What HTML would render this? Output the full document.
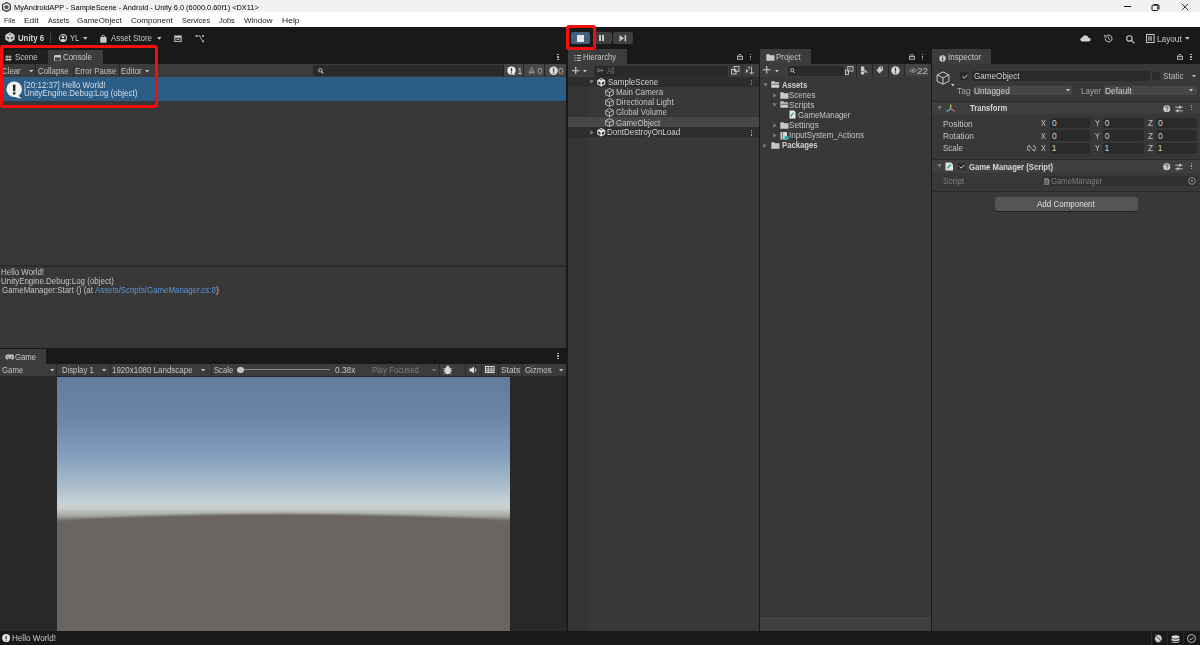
<!DOCTYPE html>
<html><head><meta charset="utf-8"><style>
html,body{margin:0;padding:0;}
body{width:1200px;height:645px;position:relative;overflow:hidden;background:#191919;font-family:"Liberation Sans",sans-serif;}
body>div,body>span,body>svg{position:absolute;}
body>span{white-space:nowrap;transform-origin:0 0;}
</style></head><body>
<div style="left:0px;top:0px;width:1200px;height:12px;background:#f1f1f1;"></div>
<div style="left:0px;top:12px;width:1200px;height:15px;background:#ffffff;"></div>
<div style="left:0px;top:27px;width:1200px;height:618px;background:#191919;"></div>
<svg style="left:2px;top:2px" width="9" height="10" viewBox="0 0 9 10"><path d="M4.5 0.6 L8.4 2.8 V7.3 L4.5 9.5 L0.6 7.3 V2.8Z" fill="none" stroke="#333" stroke-width="1.2"/><path d="M4.5 3 L6.5 4.1 V6.3 L4.5 7.4 L2.5 6.3 V4.1Z" fill="#555"/></svg>
<span style="left:14.41px;top:4.00px;font-size:7.850px;line-height:7.850px;color:#000000;transform:scaleX(0.9429);">MyAndroidAPP - SampleScene - Android - Unity 6.0 (6000.0.60f1) &lt;DX11&gt;</span>
<div style="left:1124.3px;top:6px;width:6.7px;height:1px;background:#111;"></div>
<svg style="left:1151px;top:2.5px" width="9" height="8" viewBox="0 0 9 8"><rect x="1" y="2.2" width="5.8" height="5.3" rx="1" fill="none" stroke="#111" stroke-width="1"/><path d="M2.6 1.6 H6.4 Q8 1.6 8 3.2 V6.4" fill="none" stroke="#111" stroke-width="1"/></svg>
<svg style="left:1180.5px;top:2.5px" width="8" height="8" viewBox="0 0 8 8"><path d="M0.8 0.8 L7.2 7.2 M7.2 0.8 L0.8 7.2" stroke="#222" stroke-width="0.9"/></svg>
<span style="left:4.43px;top:17.00px;font-size:7.850px;line-height:7.850px;color:#222;transform:scaleX(0.9063);">File</span>
<span style="left:24.33px;top:17.00px;font-size:7.850px;line-height:7.850px;color:#222;transform:scaleX(1.0713);">Edit</span>
<span style="left:47.50px;top:17.00px;font-size:7.850px;line-height:7.850px;color:#222;transform:scaleX(0.9022);">Assets</span>
<span style="left:77.10px;top:17.00px;font-size:7.850px;line-height:7.850px;color:#222;transform:scaleX(1.0182);">GameObject</span>
<span style="left:131.35px;top:17.00px;font-size:7.850px;line-height:7.850px;color:#222;transform:scaleX(1.0283);">Component</span>
<span style="left:182.17px;top:17.00px;font-size:7.850px;line-height:7.850px;color:#222;transform:scaleX(0.9329);">Services</span>
<span style="left:219.39px;top:17.00px;font-size:7.850px;line-height:7.850px;color:#222;transform:scaleX(0.9585);">Jobs</span>
<span style="left:244.46px;top:17.00px;font-size:7.850px;line-height:7.850px;color:#222;transform:scaleX(1.0213);">Window</span>
<span style="left:281.82px;top:17.00px;font-size:7.850px;line-height:7.850px;color:#222;transform:scaleX(1.0863);">Help</span>
<svg style="left:5.2px;top:32.1px" width="10" height="10.5" viewBox="0 0 10 10.5"><path d="M5 0.2 L9.6 2.7 V7.8 L5 10.3 L0.4 7.8 V2.7Z" fill="#cfcfcf"/><path d="M3.9 1.9 H6.1 L5 3.3Z" fill="#3a3a3a"/><path d="M2.2 4.4 L4 5.4 V7.6 L2.2 6.6Z" fill="#3a3a3a"/><path d="M7.8 4.4 L6 5.4 V7.6 L7.8 6.6Z" fill="#3a3a3a"/></svg>
<span style="left:18.28px;top:34.00px;font-size:8.850px;line-height:8.850px;color:#d8d8d8;font-weight:bold;transform:scaleX(0.8806);">Unity 6</span>
<div style="left:49.5px;top:33px;width:0.8px;height:10px;background:#444;"></div>
<svg style="left:58.8px;top:33.9px" width="8" height="8" viewBox="0 0 8 8"><circle cx="4" cy="4" r="3.45" fill="none" stroke="#d0d0d0" stroke-width="1.1"/><circle cx="4" cy="3.1" r="1.35" fill="#d8d8d8"/><path d="M1.3 6.1 Q4 4 6.7 6.1 Q5.6 7.5 4 7.5 Q2.4 7.5 1.3 6.1Z" fill="#d8d8d8"/></svg>
<span style="left:69.85px;top:34.00px;font-size:8.700px;line-height:8.700px;color:#c8c8c8;transform:scaleX(0.8842);">YL</span>
<svg style="left:83.3px;top:37px" width="5" height="3" viewBox="0 0 5 3"><path d="M0 0 H4.5 L2.25 2.8Z" fill="#c8c8c8"/></svg>
<svg style="left:99.5px;top:33.5px" width="7" height="9" viewBox="0 0 7 9"><rect x="0.2" y="3" width="6.4" height="5.8" rx="0.8" fill="#c8c8c8"/><path d="M1.8 3.2 V2.2 Q3.3 0.3 4.9 2.2 V3.2" fill="none" stroke="#c8c8c8" stroke-width="1"/></svg>
<span style="left:111.00px;top:34.00px;font-size:8.700px;line-height:8.700px;color:#c8c8c8;transform:scaleX(0.9119);">Asset Store</span>
<svg style="left:157px;top:37px" width="5" height="3" viewBox="0 0 5 3"><path d="M0 0 H4.5 L2.25 2.8Z" fill="#c8c8c8"/></svg>
<svg style="left:174px;top:34.5px" width="8" height="7" viewBox="0 0 8 7"><rect x="0.3" y="0.5" width="7.4" height="1.6" fill="#d0d0d0"/><rect x="0.8" y="2.8" width="6.4" height="3.9" fill="none" stroke="#d0d0d0" stroke-width="1"/><rect x="2.5" y="4.2" width="3" height="0.9" fill="#d0d0d0"/></svg>
<svg style="left:195px;top:33.5px" width="10" height="9" viewBox="0 0 10 9"><circle cx="1.5" cy="2" r="1" fill="#c8c8c8"/><circle cx="8" cy="2" r="1" fill="#c8c8c8"/><circle cx="8" cy="7.3" r="1" fill="#c8c8c8"/><path d="M2.5 2 H5 L7 6.5" fill="none" stroke="#c8c8c8" stroke-width="0.8"/></svg>
<div style="left:570.6px;top:32px;width:19.4px;height:12px;background:#46607e;border-radius:2px"></div>
<div style="left:576.5px;top:34.6px;width:7.5px;height:7.0px;background:#e8e8e8;"></div>
<div style="left:593px;top:32px;width:19px;height:12px;background:#3f3f3f;border-radius:2px"></div>
<div style="left:599.3px;top:34.8px;width:1.5px;height:6.5px;background:#c8c8c8;"></div>
<div style="left:602.4px;top:34.8px;width:1.5px;height:6.5px;background:#c8c8c8;"></div>
<div style="left:613px;top:32px;width:20px;height:12px;background:#3f3f3f;border-radius:2px"></div>
<svg style="left:619px;top:34.8px" width="8" height="7" viewBox="0 0 8 7"><path d="M0.5 0 L5 3.25 L0.5 6.5Z" fill="#c8c8c8"/><rect x="5.6" y="0" width="1.5" height="6.5" fill="#c8c8c8"/></svg>
<svg style="left:1079.5px;top:35px" width="11" height="7" viewBox="0 0 11 7"><path d="M2.5 6.5 Q0.3 6.5 0.3 4.6 Q0.3 3 2 2.8 Q2.6 0.3 5.3 0.3 Q8 0.4 8.5 2.8 Q10.7 3 10.7 4.7 Q10.6 6.5 8.6 6.5Z" fill="#d2d2d2"/></svg>
<svg style="left:1103.5px;top:34.3px" width="9" height="9" viewBox="0 0 9 9"><path d="M1.2 4.5 A3.4 3.4 0 1 0 2.3 2" fill="none" stroke="#c8c8c8" stroke-width="1"/><path d="M0.8 0.6 V3 H3.1" fill="none" stroke="#c8c8c8" stroke-width="0.9"/><path d="M4.6 2.6 V4.8 L6 6" fill="none" stroke="#c8c8c8" stroke-width="0.9"/></svg>
<svg style="left:1126px;top:34.5px" width="9" height="9" viewBox="0 0 9 9"><circle cx="3.4" cy="3.4" r="2.7" fill="none" stroke="#c8c8c8" stroke-width="1.1"/><path d="M5.4 5.4 L8.3 8.3" stroke="#c8c8c8" stroke-width="1.3"/></svg>
<svg style="left:1145.8px;top:34.2px" width="9" height="9" viewBox="0 0 9 9"><rect x="0.5" y="0.5" width="7.6" height="8" fill="none" stroke="#c8c8c8" stroke-width="1"/><rect x="2.3" y="2.2" width="1.2" height="4.6" fill="#c8c8c8"/><rect x="4.5" y="2.2" width="1.2" height="4.6" fill="#c8c8c8"/></svg>
<span style="left:1156.74px;top:35.00px;font-size:8.700px;line-height:8.700px;color:#c8c8c8;transform:scaleX(0.9464);">Layout</span>
<svg style="left:1185.4px;top:37.2px" width="5" height="3" viewBox="0 0 5 3"><path d="M0 0 H4.6 L2.3 2.8Z" fill="#c8c8c8"/></svg>
<div style="left:0px;top:50px;width:47.8px;height:14px;background:#1f1f1f;"></div>
<div style="left:47.8px;top:50px;width:55.1px;height:14px;background:#3c3c3c;"></div>
<div style="left:0px;top:64px;width:566px;height:13px;background:#3c3c3c;"></div>
<div style="left:0px;top:77px;width:566px;height:270.5px;background:#383838;"></div>
<div style="left:0px;top:77px;width:566px;height:23.7px;background:#2c5d87;"></div>
<div style="left:0px;top:265.3px;width:566px;height:1.7px;background:#2b2b2b;"></div>
<div style="left:567.8px;top:49px;width:59.7px;height:15px;background:#3c3c3c;"></div>
<div style="left:568px;top:64px;width:190.6px;height:13px;background:#3c3c3c;"></div>
<div style="left:568px;top:77px;width:190.6px;height:554px;background:#383838;"></div>
<div style="left:568px;top:86.8px;width:20.2px;height:544.2px;background:#343434;"></div>
<div style="left:760px;top:49.3px;width:50.8px;height:14.7px;background:#3c3c3c;"></div>
<div style="left:760px;top:64px;width:170.8px;height:12.6px;background:#3c3c3c;"></div>
<div style="left:760px;top:76.6px;width:170.8px;height:554.4px;background:#383838;"></div>
<div style="left:760px;top:616.4px;width:170.8px;height:0.8px;background:#343434;"></div>
<div style="left:760px;top:617.2px;width:170.8px;height:13.6px;background:#404040;"></div>
<div style="left:932px;top:49px;width:58.5px;height:15px;background:#3c3c3c;"></div>
<div style="left:932px;top:64px;width:268px;height:567px;background:#383838;"></div>
<div style="left:0px;top:348.6px;width:46px;height:15.4px;background:#3c3c3c;"></div>
<div style="left:0px;top:364px;width:566px;height:12px;background:#3c3c3c;"></div>
<div style="left:0px;top:376px;width:566px;height:255px;background:#282828;"></div>
<svg style="left:5px;top:54.5px" width="7" height="6.5" viewBox="0 0 7 6.5"><path d="M2 0.3 V6.2 M4.8 0.3 V6.2 M0.3 1.9 H6.7 M0.3 4.6 H6.7" stroke="#c4c4c4" stroke-width="1"/></svg>
<span style="left:15.04px;top:54.00px;font-size:8.150px;line-height:8.150px;color:#c4c4c4;transform:scaleX(0.9861);">Scene</span>
<svg style="left:53.7px;top:54.5px" width="7.5" height="6.8" viewBox="0 0 7.5 6.8"><rect x="0.5" y="0.5" width="6.4" height="5.6" rx="0.6" fill="none" stroke="#c4c4c4" stroke-width="1"/><rect x="0.5" y="0.5" width="6.4" height="2" fill="#c4c4c4"/></svg>
<span style="left:63.36px;top:54.00px;font-size:8.150px;line-height:8.150px;color:#c8c8c8;transform:scaleX(0.9682);">Console</span>
<div style="left:557.3px;top:54.0px;width:1.4px;height:1.4px;background:#c4c4c4;border-radius:50%"></div>
<div style="left:557.3px;top:56.3px;width:1.4px;height:1.4px;background:#c4c4c4;border-radius:50%"></div>
<div style="left:557.3px;top:58.6px;width:1.4px;height:1.4px;background:#c4c4c4;border-radius:50%"></div>
<div style="left:35.3px;top:64px;width:0.8px;height:13px;background:#2a2a2a;"></div>
<div style="left:72.7px;top:64px;width:0.8px;height:13px;background:#2a2a2a;"></div>
<div style="left:119.3px;top:64px;width:0.8px;height:13px;background:#2a2a2a;"></div>
<span style="left:2.11px;top:67.00px;font-size:8.300px;line-height:8.300px;color:#c4c4c4;transform:scaleX(0.9431);">Clear</span>
<svg style="left:28.7px;top:70.2px" width="4.2" height="2.6" viewBox="0 0 4.2 2.6"><path d="M0 0 H4.2 L2.1 2.6Z" fill="#c4c4c4"/></svg>
<span style="left:38.31px;top:67.00px;font-size:8.300px;line-height:8.300px;color:#c4c4c4;transform:scaleX(0.9512);">Collapse</span>
<span style="left:75.08px;top:67.00px;font-size:8.300px;line-height:8.300px;color:#c4c4c4;transform:scaleX(0.9310);">Error Pause</span>
<span style="left:121.37px;top:67.00px;font-size:8.300px;line-height:8.300px;color:#c4c4c4;transform:scaleX(0.9562);">Editor</span>
<svg style="left:144.9px;top:70.2px" width="4.2" height="2.6" viewBox="0 0 4.2 2.6"><path d="M0 0 H4.2 L2.1 2.6Z" fill="#c4c4c4"/></svg>
<div style="left:313.4px;top:65px;width:189.3px;height:11.3px;background:#2a2a2a;border-radius:2px"></div>
<svg style="left:317.5px;top:67.5px" width="6" height="6" viewBox="0 0 6 6"><circle cx="2.3" cy="2.3" r="1.7" fill="none" stroke="#c4c4c4" stroke-width="1"/><path d="M3.5 3.5 L5.3 5.3" stroke="#c4c4c4" stroke-width="1.1"/></svg>
<div style="left:504px;top:64.3px;width:19px;height:12.0px;background:#464646;"></div>
<div style="left:524px;top:64.3px;width:20px;height:12.0px;background:#464646;"></div>
<div style="left:545px;top:64.3px;width:20px;height:12.0px;background:#464646;"></div>
<div style="left:502.7px;top:64px;width:1.0px;height:13px;background:#232323;"></div>
<div style="left:523.2px;top:64px;width:1.0px;height:13px;background:#232323;"></div>
<div style="left:544.2px;top:64px;width:1.0px;height:13px;background:#232323;"></div>
<svg style="left:507px;top:65.5px" width="9.5" height="10" viewBox="0 0 9.5 10"><circle cx="4.5" cy="4.5" r="4.1" fill="#f0f0f0"/><path d="M6 7 L8.6 9.6 L5 8.3Z" fill="#f0f0f0"/><rect x="3.9" y="2" width="1.3" height="3.6" fill="#333"/><rect x="3.9" y="6.3" width="1.3" height="1.2" fill="#333"/></svg>
<span style="left:517.33px;top:67.00px;font-size:9.000px;line-height:9.000px;color:#c4c4c4;transform:scaleX(1.0000);">1</span>
<svg style="left:527.5px;top:66px" width="7.5" height="8" viewBox="0 0 7.5 8"><path d="M3.7 0.5 L7.2 7.5 H0.3Z" fill="#8a8a8a"/><rect x="3.2" y="3" width="1" height="2.6" fill="#444"/></svg>
<span style="left:537.14px;top:67.00px;font-size:9.000px;line-height:9.000px;color:#a8a8a8;transform:scaleX(1.0000);">0</span>
<svg style="left:548.5px;top:65.5px" width="9.5" height="10" viewBox="0 0 9.5 10"><circle cx="4.6" cy="4.8" r="4.2" fill="#dcdcdc"/><rect x="3.9" y="2.2" width="1.3" height="3.6" fill="#444"/><rect x="3.9" y="6.5" width="1.3" height="1.2" fill="#444"/></svg>
<span style="left:558.14px;top:67.00px;font-size:9.000px;line-height:9.000px;color:#a8a8a8;transform:scaleX(1.0000);">0</span>
<svg style="left:5.5px;top:81px" width="17" height="18.5" viewBox="0 0 17 18.5"><circle cx="8.2" cy="8.2" r="7.8" fill="#f2f2f2"/><path d="M11 13.5 L16 18 L8 15.8Z" fill="#f2f2f2"/><rect x="7" y="3.6" width="2.4" height="6.6" rx="0.6" fill="#222"/><rect x="7" y="11.3" width="2.4" height="2.2" fill="#222"/></svg>
<span style="left:24.14px;top:82.00px;font-size:8.150px;line-height:8.150px;color:#d4dfea;transform:scaleX(0.9895);">[20:12:37] Hello World!</span>
<span style="left:24.10px;top:90.00px;font-size:8.150px;line-height:8.150px;color:#d4dfea;transform:scaleX(0.9840);">UnityEngine.Debug:Log (object)</span>
<span style="left:1.37px;top:268.00px;font-size:8.300px;line-height:8.300px;color:#c4c4c4;transform:scaleX(0.9563);">Hello World!</span>
<span style="left:1.40px;top:277.00px;font-size:8.300px;line-height:8.300px;color:#c4c4c4;transform:scaleX(0.9590);">UnityEngine.Debug:Log (object)</span>
<span style="left:1.60px;top:286.00px;font-size:8.300px;line-height:8.300px;color:#c4c4c4;transform:scaleX(0.9573);">GameManager:Start () (at </span>
<span style="left:95.00px;top:286.00px;font-size:8.300px;line-height:8.300px;color:#5e93d6;transform:scaleX(0.9489);">Assets/Scripts/GameManager.cs:8</span>
<span style="left:215.96px;top:286.00px;font-size:8.300px;line-height:8.300px;color:#c4c4c4;transform:scaleX(1.0000);">)</span>
<div style="left:0px;top:45.4px;width:158.2px;height:62.8px;background:transparent;box-sizing:border-box;border:3.4px solid #f40f0f;border-radius:3px"></div>
<div style="left:565.8px;top:24.8px;width:30.6px;height:25.4px;background:transparent;box-sizing:border-box;border:3.4px solid #f40f0f;border-radius:3px"></div>
<svg style="left:56.7px;top:376.6px" width="453" height="254.2" viewBox="0 0 453 254.2"><defs><linearGradient id="sky" x1="0" y1="0" x2="0" y2="254" gradientUnits="userSpaceOnUse">
<stop offset="0" stop-color="#627b9c"/><stop offset="0.17" stop-color="#6f87a6"/><stop offset="0.29" stop-color="#809bba"/>
<stop offset="0.386" stop-color="#9bb2c6"/><stop offset="0.445" stop-color="#b1c2cf"/><stop offset="0.484" stop-color="#c2cfd5"/>
<stop offset="0.504" stop-color="#c9d2d3"/><stop offset="0.522" stop-color="#c4cac8"/><stop offset="0.545" stop-color="#a6a9a5"/><stop offset="0.566" stop-color="#7a7873"/></linearGradient>
<filter id="gb" x="-5%" y="-5%" width="110%" height="110%"><feGaussianBlur stdDeviation="1.2"/></filter></defs>
<rect x="0" y="0" width="453" height="254" fill="url(#sky)"/>
<path d="M-5 143.5 Q226.5 130 458 143.5 V260 H-5Z" fill="#6b6560" filter="url(#gb)"/>
</svg>
<div style="left:0px;top:376px;width:56.7px;height:255px;background:#282828;"></div>
<div style="left:509.5px;top:376px;width:56.5px;height:255px;background:#282828;"></div>
<svg style="left:4.8px;top:353.5px" width="9.5" height="6" viewBox="0 0 9.5 6"><path d="M2.5 0.5 H7 Q9.2 0.5 9.2 3 Q9.2 5.5 7.4 5.5 Q6.5 5.5 6 4.5 H3.5 Q3 5.5 2.1 5.5 Q0.3 5.5 0.3 3 Q0.3 0.5 2.5 0.5Z" fill="#c4c4c4"/><rect x="1.8" y="2.6" width="2.2" height="0.8" fill="#3c3c3c"/><circle cx="6.5" cy="3" r="0.6" fill="#3c3c3c"/><circle cx="7.7" cy="3" r="0.6" fill="#3c3c3c"/></svg>
<span style="left:15.31px;top:354.00px;font-size:8.150px;line-height:8.150px;color:#c8c8c8;transform:scaleX(0.9564);">Game</span>
<div style="left:557.3px;top:353.0px;width:1.4px;height:1.4px;background:#c4c4c4;border-radius:50%"></div>
<div style="left:557.3px;top:355.3px;width:1.4px;height:1.4px;background:#c4c4c4;border-radius:50%"></div>
<div style="left:557.3px;top:357.6px;width:1.4px;height:1.4px;background:#c4c4c4;border-radius:50%"></div>
<div style="left:55.5px;top:364px;width:0.8px;height:12px;background:#2a2a2a;"></div>
<div style="left:110px;top:364px;width:0.8px;height:12px;background:#2a2a2a;"></div>
<div style="left:211.4px;top:364px;width:0.8px;height:12px;background:#2a2a2a;"></div>
<div style="left:438.75px;top:364px;width:0.8px;height:12px;background:#2a2a2a;"></div>
<div style="left:465px;top:364px;width:0.8px;height:12px;background:#2a2a2a;"></div>
<div style="left:481px;top:364px;width:0.8px;height:12px;background:#2a2a2a;"></div>
<div style="left:497.5px;top:364px;width:0.8px;height:12px;background:#2a2a2a;"></div>
<div style="left:522px;top:364px;width:0.8px;height:12px;background:#2a2a2a;"></div>
<span style="left:2.01px;top:366.00px;font-size:8.300px;line-height:8.300px;color:#c4c4c4;transform:scaleX(0.9437);">Game</span>
<svg style="left:49.5px;top:369.0px" width="4.2" height="2.6" viewBox="0 0 4.2 2.6"><path d="M0 0 H4.2 L2.1 2.6Z" fill="#c4c4c4"/></svg>
<span style="left:61.68px;top:366.00px;font-size:8.300px;line-height:8.300px;color:#c4c4c4;transform:scaleX(0.9282);">Display 1</span>
<svg style="left:101.6px;top:369.0px" width="4.2" height="2.6" viewBox="0 0 4.2 2.6"><path d="M0 0 H4.2 L2.1 2.6Z" fill="#c4c4c4"/></svg>
<span style="left:111.70px;top:366.00px;font-size:8.300px;line-height:8.300px;color:#c4c4c4;transform:scaleX(0.9598);">1920x1080 Landscape</span>
<svg style="left:201px;top:369.0px" width="4.2" height="2.6" viewBox="0 0 4.2 2.6"><path d="M0 0 H4.2 L2.1 2.6Z" fill="#c4c4c4"/></svg>
<span style="left:214.16px;top:366.00px;font-size:8.300px;line-height:8.300px;color:#c4c4c4;transform:scaleX(0.9229);">Scale</span>
<div style="left:240px;top:369.4px;width:90px;height:0.8px;background:#8a8a8a;"></div>
<div style="left:237px;top:366.6px;width:6.6px;height:6.6px;background:#c4c4c4;border-radius:50%"></div>
<span style="left:334.67px;top:366.00px;font-size:8.300px;line-height:8.300px;color:#c4c4c4;transform:scaleX(1.0061);">0.38x</span>
<span style="left:372.38px;top:366.00px;font-size:8.300px;line-height:8.300px;color:#7c7c7c;transform:scaleX(0.9311);">Play Focused</span>
<svg style="left:431.8px;top:369.0px" width="4.2" height="2.6" viewBox="0 0 4.2 2.6"><path d="M0 0 H4.2 L2.1 2.6Z" fill="#7c7c7c"/></svg>
<svg style="left:442.5px;top:364.8px" width="9.5" height="10" viewBox="0 0 9.5 10"><ellipse cx="4.75" cy="5.6" rx="3" ry="3.6" fill="#d8d8d8"/><circle cx="4.75" cy="2" r="1.6" fill="#d8d8d8"/><path d="M0.5 3.5 L2.5 4.5 M9 3.5 L7 4.5 M0.3 6 H2 M9.2 6 H7.5 M0.8 9 L2.3 7.8 M8.7 9 L7.2 7.8" stroke="#d8d8d8" stroke-width="0.9"/></svg>
<svg style="left:468.8px;top:365.7px" width="9" height="8" viewBox="0 0 9 8"><path d="M0.5 2.5 H2.5 L5 0.5 V7.5 L2.5 5.5 H0.5Z" fill="#e0e0e0"/><path d="M6.3 2.3 Q7.5 4 6.3 5.7" fill="none" stroke="#e0e0e0" stroke-width="0.9"/></svg>
<svg style="left:485px;top:366px" width="9.5" height="7" viewBox="0 0 9.5 7"><rect x="0.5" y="0.5" width="8.5" height="6" fill="none" stroke="#d8d8d8" stroke-width="1"/><path d="M0.5 3 H9 M3.3 0.5 V6.5 M6.2 0.5 V6.5 M0.5 4.8 H9" stroke="#d8d8d8" stroke-width="0.8"/></svg>
<span style="left:500.62px;top:366.00px;font-size:8.300px;line-height:8.300px;color:#c4c4c4;transform:scaleX(1.0131);">Stats</span>
<span style="left:524.61px;top:366.00px;font-size:8.300px;line-height:8.300px;color:#c4c4c4;transform:scaleX(0.9478);">Gizmos</span>
<svg style="left:558.5px;top:369.0px" width="4.2" height="2.6" viewBox="0 0 4.2 2.6"><path d="M0 0 H4.2 L2.1 2.6Z" fill="#c4c4c4"/></svg>
<svg style="left:574px;top:54.5px" width="7.5" height="6.2" viewBox="0 0 7.5 6.2"><path d="M0.3 0.5 H1.5 M0.3 3 H1.5 M0.3 5.6 H1.5 M2.8 0.5 H7.2 M2.8 3 H7.2 M2.8 5.6 H7.2" stroke="#c4c4c4" stroke-width="1"/></svg>
<span style="left:583.38px;top:54.00px;font-size:8.150px;line-height:8.150px;color:#c8c8c8;transform:scaleX(0.9553);">Hierarchy</span>
<svg style="left:736.9px;top:54.3px" width="6" height="5.5" viewBox="0 0 6 5.5"><path d="M1.2 2.6 V1.8 Q1.2 0.4 2.8 0.4 Q4.4 0.4 4.4 1.8" fill="none" stroke="#c4c4c4" stroke-width="0.9"/><rect x="0.4" y="2.6" width="5.2" height="2.6" fill="none" stroke="#c4c4c4" stroke-width="0.9"/></svg>
<div style="left:749.8px;top:54.0px;width:1.4px;height:1.4px;background:#c4c4c4;border-radius:50%"></div>
<div style="left:749.8px;top:56.3px;width:1.4px;height:1.4px;background:#c4c4c4;border-radius:50%"></div>
<div style="left:749.8px;top:58.6px;width:1.4px;height:1.4px;background:#c4c4c4;border-radius:50%"></div>
<svg style="left:572.3px;top:66.5px" width="7.5" height="7.5" viewBox="0 0 7.5 7.5"><path d="M3.75 0 V7.5 M0 3.75 H7.5" stroke="#d0d0d0" stroke-width="1.1"/></svg>
<svg style="left:582.5px;top:69.6px" width="4" height="2.5" viewBox="0 0 4 2.5"><path d="M0 0 H4 L2.0 2.5Z" fill="#c4c4c4"/></svg>
<div style="left:594px;top:65.8px;width:134px;height:10.9px;background:#2a2a2a;border-radius:2px"></div>
<svg style="left:597px;top:68px" width="7" height="5" viewBox="0 0 7 5"><circle cx="1.8" cy="2.5" r="1.3" fill="none" stroke="#9a9a9a" stroke-width="0.8"/><path d="M3 2.5 H6.5 M4.6 1.2 L6 2.5 L4.6 3.8" fill="none" stroke="#9a9a9a" stroke-width="0.7"/></svg>
<span style="left:606.80px;top:67.00px;font-size:8.450px;line-height:8.450px;color:#777777;transform:scaleX(0.7701);">All</span>
<div style="left:729px;top:64px;width:0.8px;height:13px;background:#2f2f2f;"></div>
<div style="left:742px;top:64px;width:0.8px;height:13px;background:#2f2f2f;"></div>
<svg style="left:731px;top:66.2px" width="8.5" height="8.5" viewBox="0 0 8.5 8.5"><rect x="0.5" y="3.5" width="4.5" height="4.5" fill="none" stroke="#c8c8c8" stroke-width="0.9"/><rect x="3.2" y="0.5" width="4.8" height="4.8" fill="none" stroke="#c8c8c8" stroke-width="0.9"/><rect x="3.2" y="3.5" width="1.8" height="1.8" fill="#c8c8c8"/></svg>
<svg style="left:745px;top:66px" width="9.5" height="9" viewBox="0 0 9.5 9"><path d="M6.6 0.5 V8 M4.6 6 L6.6 8.2 L8.6 6" fill="none" stroke="#c8c8c8" stroke-width="0.9"/><path d="M0.5 7.5 L3.5 4.5 L1.5 3 Z M3 1 L4.5 0.2 L4.8 3.8" fill="#c8c8c8"/></svg>
<div style="left:568px;top:77.4px;width:190.6px;height:9.4px;background:#2d2d2d;"></div>
<div style="left:568px;top:117.2px;width:190.6px;height:10.2px;background:#474747;"></div>
<div style="left:568px;top:127.4px;width:190.6px;height:9.4px;background:#2d2d2d;"></div>
<svg style="left:589.4px;top:80.3px" width="5" height="4" viewBox="0 0 5 4"><path d="M0.2 0.3 H4.8 L2.5 3.6Z" fill="#808080"/></svg>
<svg style="left:597.0px;top:78.19999999999999px" width="8.5" height="8.5" viewBox="0 0 8.5 8.5"><path d="M4.25 0.1 L8.2 2.2 V6.3 L4.25 8.4 L0.3 6.3 V2.2Z" fill="#ececec"/><path d="M3.1 0.9 H5.4 L4.25 2.7Z" fill="#2d2d2d"/><path d="M1.3 3.2 L3.5 4.4 V7 L1.3 5.8Z" fill="#2d2d2d"/><path d="M7.2 3.2 L5 4.4 V7 L7.2 5.8Z" fill="#2d2d2d"/></svg>
<span style="left:607.64px;top:79.00px;font-size:8.150px;line-height:8.150px;color:#d2d2d2;transform:scaleX(0.9912);">SampleScene</span>
<div style="left:750.5px;top:79.5px;width:1.4px;height:1.4px;background:#c4c4c4;border-radius:50%"></div>
<div style="left:750.5px;top:81.8px;width:1.4px;height:1.4px;background:#c4c4c4;border-radius:50%"></div>
<div style="left:750.5px;top:84.1px;width:1.4px;height:1.4px;background:#c4c4c4;border-radius:50%"></div>
<svg style="left:605px;top:87.7px" width="9" height="9" viewBox="0 0 9 9"><g transform="scale(1.0)"><path d="M4.5 0.6 L8.3 2.5 V6.6 L4.5 8.5 L0.7 6.6 V2.5Z M0.7 2.5 L4.5 4.4 L8.3 2.5 M4.5 4.4 V8.5" fill="none" stroke="#c4c4c4" stroke-width="0.9" stroke-linejoin="round"/></g></svg>
<span style="left:615.87px;top:89.00px;font-size:8.150px;line-height:8.150px;color:#c4c4c4;transform:scaleX(0.9638);">Main Camera</span>
<svg style="left:605px;top:97.7px" width="9" height="9" viewBox="0 0 9 9"><g transform="scale(1.0)"><path d="M4.5 0.6 L8.3 2.5 V6.6 L4.5 8.5 L0.7 6.6 V2.5Z M0.7 2.5 L4.5 4.4 L8.3 2.5 M4.5 4.4 V8.5" fill="none" stroke="#c4c4c4" stroke-width="0.9" stroke-linejoin="round"/></g></svg>
<span style="left:615.85px;top:99.00px;font-size:8.150px;line-height:8.150px;color:#c4c4c4;transform:scaleX(0.9923);">Directional Light</span>
<svg style="left:605px;top:107.7px" width="9" height="9" viewBox="0 0 9 9"><g transform="scale(1.0)"><path d="M4.5 0.6 L8.3 2.5 V6.6 L4.5 8.5 L0.7 6.6 V2.5Z M0.7 2.5 L4.5 4.4 L8.3 2.5 M4.5 4.4 V8.5" fill="none" stroke="#c4c4c4" stroke-width="0.9" stroke-linejoin="round"/></g></svg>
<span style="left:616.11px;top:109.00px;font-size:8.150px;line-height:8.150px;color:#c4c4c4;transform:scaleX(0.9621);">Global Volume</span>
<svg style="left:605px;top:118.0px" width="9" height="9" viewBox="0 0 9 9"><g transform="scale(1.0)"><path d="M4.5 0.6 L8.3 2.5 V6.6 L4.5 8.5 L0.7 6.6 V2.5Z M0.7 2.5 L4.5 4.4 L8.3 2.5 M4.5 4.4 V8.5" fill="none" stroke="#c4c4c4" stroke-width="0.9" stroke-linejoin="round"/></g></svg>
<span style="left:616.10px;top:120.00px;font-size:8.150px;line-height:8.150px;color:#c4c4c4;transform:scaleX(0.9697);">GameObject</span>
<svg style="left:590px;top:130px" width="4" height="5" viewBox="0 0 4 5"><path d="M0.3 0.2 V4.8 L3.6 2.5Z" fill="#808080"/></svg>
<svg style="left:597.0px;top:128.3px" width="8.5" height="8.5" viewBox="0 0 8.5 8.5"><path d="M4.25 0.1 L8.2 2.2 V6.3 L4.25 8.4 L0.3 6.3 V2.2Z" fill="#ececec"/><path d="M3.1 0.9 H5.4 L4.25 2.7Z" fill="#2d2d2d"/><path d="M1.3 3.2 L3.5 4.4 V7 L1.3 5.8Z" fill="#2d2d2d"/><path d="M7.2 3.2 L5 4.4 V7 L7.2 5.8Z" fill="#2d2d2d"/></svg>
<span style="left:606.66px;top:129.00px;font-size:8.150px;line-height:8.150px;color:#d2d2d2;transform:scaleX(0.9884);">DontDestroyOnLoad</span>
<div style="left:750.5px;top:129.6px;width:1.4px;height:1.4px;background:#c4c4c4;border-radius:50%"></div>
<div style="left:750.5px;top:131.9px;width:1.4px;height:1.4px;background:#c4c4c4;border-radius:50%"></div>
<div style="left:750.5px;top:134.2px;width:1.4px;height:1.4px;background:#c4c4c4;border-radius:50%"></div>
<svg style="left:765.5px;top:54.2px" width="9" height="7" viewBox="0 0 9 7"><path d="M0.3 0.3 H3.3 L4.2 1.3 H8.5 V6.7 H0.3Z" fill="#c8c8c8"/></svg>
<span style="left:776.07px;top:54.00px;font-size:8.150px;line-height:8.150px;color:#c8c8c8;transform:scaleX(0.9735);">Project</span>
<svg style="left:909.2px;top:54.3px" width="6" height="5.5" viewBox="0 0 6 5.5"><path d="M1.2 2.6 V1.8 Q1.2 0.4 2.8 0.4 Q4.4 0.4 4.4 1.8" fill="none" stroke="#c4c4c4" stroke-width="0.9"/><rect x="0.4" y="2.6" width="5.2" height="2.6" fill="none" stroke="#c4c4c4" stroke-width="0.9"/></svg>
<div style="left:921.6999999999999px;top:54.0px;width:1.4px;height:1.4px;background:#c4c4c4;border-radius:50%"></div>
<div style="left:921.6999999999999px;top:56.3px;width:1.4px;height:1.4px;background:#c4c4c4;border-radius:50%"></div>
<div style="left:921.6999999999999px;top:58.6px;width:1.4px;height:1.4px;background:#c4c4c4;border-radius:50%"></div>
<svg style="left:763.2px;top:66.4px" width="7.5" height="7.5" viewBox="0 0 7.5 7.5"><path d="M3.75 0 V7.5 M0 3.75 H7.5" stroke="#d0d0d0" stroke-width="1.1"/></svg>
<svg style="left:775.2px;top:69.6px" width="4" height="2.5" viewBox="0 0 4 2.5"><path d="M0 0 H4 L2.0 2.5Z" fill="#c4c4c4"/></svg>
<div style="left:788px;top:65.8px;width:55.5px;height:10.2px;background:#2a2a2a;border-radius:2px"></div>
<svg style="left:789.5px;top:68px" width="5.5" height="5.5" viewBox="0 0 5.5 5.5"><circle cx="2.2" cy="2.2" r="1.6" fill="none" stroke="#c4c4c4" stroke-width="0.9"/><path d="M3.4 3.4 L5 5" stroke="#c4c4c4" stroke-width="1"/></svg>
<div style="left:856px;top:64px;width:1px;height:12.6px;background:#272727;"></div>
<div style="left:871.5px;top:64px;width:1.0px;height:12.6px;background:#272727;"></div>
<div style="left:887.5px;top:64px;width:1.0px;height:12.6px;background:#272727;"></div>
<div style="left:903.5px;top:64px;width:1.0px;height:12.6px;background:#272727;"></div>
<svg style="left:845px;top:66.2px" width="8.5" height="9" viewBox="0 0 8.5 9"><rect x="2.8" y="0.5" width="5.2" height="4.6" fill="none" stroke="#c8c8c8" stroke-width="0.9"/><rect x="0.5" y="4.2" width="3" height="4.2" fill="none" stroke="#c8c8c8" stroke-width="0.9"/><path d="M4 3.5 L6 2" stroke="#c8c8c8" stroke-width="0.8"/></svg>
<svg style="left:860px;top:66px" width="8" height="9" viewBox="0 0 8 9"><rect x="1" y="0.5" width="3.2" height="4.5" fill="#c8c8c8"/><circle cx="2.5" cy="7" r="1.8" fill="#c8c8c8"/><path d="M4.5 3 L7.8 6.5 H4.5Z" fill="#c8c8c8"/></svg>
<svg style="left:876.2px;top:66.3px" width="7.5" height="7.5" viewBox="0 0 7.5 7.5"><path d="M3.5 0.5 H7 V4 L3.5 7.5 L0.5 4.5Z" fill="#c8c8c8"/><circle cx="5.4" cy="2.1" r="0.8" fill="#383838"/></svg>
<svg style="left:891.2px;top:66px" width="9" height="9" viewBox="0 0 9 9"><circle cx="4.5" cy="4.5" r="4.2" fill="#d8d8d8"/><rect x="3.9" y="1.8" width="1.2" height="3.8" fill="#3c3c3c"/><rect x="3.9" y="6.3" width="1.2" height="1.2" fill="#3c3c3c"/></svg>
<div style="left:904.5px;top:64.2px;width:23.8px;height:12.2px;background:#454545;"></div>
<svg style="left:908.5px;top:68px" width="8" height="5" viewBox="0 0 8 5"><path d="M0.4 2.5 Q4 -1 7.6 2.5 Q4 6 0.4 2.5Z" fill="none" stroke="#9a9a9a" stroke-width="0.8"/><circle cx="4" cy="2.5" r="1" fill="#9a9a9a"/></svg>
<span style="left:917.01px;top:67.00px;font-size:8.850px;line-height:8.850px;color:#b8b8b8;transform:scaleX(1.1076);">22</span>
<svg style="left:763px;top:82.7px" width="5" height="4" viewBox="0 0 5 4"><path d="M0.2 0.3 H4.8 L2.5 3.6Z" fill="#808080"/></svg>
<svg style="left:771px;top:81.2px" width="9" height="7" viewBox="0 0 9 7"><path d="M0.3 0.3 H3.3 L4.2 1.3 H8.2 V6.7 H0.3Z" fill="#d0d0d0"/><path d="M1.3 3 H8.7 L8 6.7 H0.6Z" fill="#383838" opacity="0.0"/><path d="M1 3.2 H8.8" stroke="#383838" stroke-width="0.7"/></svg>
<span style="left:781.81px;top:81.00px;font-size:8.450px;line-height:8.450px;color:#d2d2d2;font-weight:bold;transform:scaleX(0.9092);">Assets</span>
<svg style="left:772.5px;top:92.6px" width="4" height="5" viewBox="0 0 4 5"><path d="M0.3 0.2 V4.8 L3.6 2.5Z" fill="#808080"/></svg>
<svg style="left:780px;top:91.5px" width="9" height="7" viewBox="0 0 9 7"><path d="M0.3 0.3 H3.3 L4.2 1.3 H8.5 V6.7 H0.3Z" fill="#c8c8c8"/></svg>
<span style="left:789.44px;top:92.00px;font-size:8.150px;line-height:8.150px;color:#c4c4c4;transform:scaleX(0.9725);">Scenes</span>
<svg style="left:772px;top:102.7px" width="5" height="4" viewBox="0 0 5 4"><path d="M0.2 0.3 H4.8 L2.5 3.6Z" fill="#808080"/></svg>
<svg style="left:780px;top:101.3px" width="9" height="7" viewBox="0 0 9 7"><path d="M0.3 0.3 H3.3 L4.2 1.3 H8.2 V6.7 H0.3Z" fill="#c8c8c8"/><path d="M1.3 3 H8.7 L8 6.7 H0.6Z" fill="#383838" opacity="0.0"/><path d="M1 3.2 H8.8" stroke="#383838" stroke-width="0.7"/></svg>
<span style="left:789.43px;top:102.00px;font-size:8.150px;line-height:8.150px;color:#c4c4c4;transform:scaleX(1.0187);">Scripts</span>
<svg style="left:789px;top:110.2px" width="7" height="9" viewBox="0 0 7 9"><path d="M0.5 0.5 H5 L6.5 2 V8.5 H0.5Z" fill="#e8e8e8"/><path d="M2 6.5 Q3.5 3 5 3.2" stroke="#2aa06a" stroke-width="1.3" fill="none"/></svg>
<span style="left:798.31px;top:112.00px;font-size:8.150px;line-height:8.150px;color:#c4c4c4;transform:scaleX(0.9660);">GameManager</span>
<svg style="left:772.5px;top:122.5px" width="4" height="5" viewBox="0 0 4 5"><path d="M0.3 0.2 V4.8 L3.6 2.5Z" fill="#808080"/></svg>
<svg style="left:780px;top:121.5px" width="9" height="7" viewBox="0 0 9 7"><path d="M0.3 0.3 H3.3 L4.2 1.3 H8.5 V6.7 H0.3Z" fill="#c8c8c8"/></svg>
<span style="left:789.43px;top:122.00px;font-size:8.150px;line-height:8.150px;color:#c4c4c4;transform:scaleX(1.0135);">Settings</span>
<svg style="left:772.5px;top:132.5px" width="4" height="5" viewBox="0 0 4 5"><path d="M0.3 0.2 V4.8 L3.6 2.5Z" fill="#808080"/></svg>
<svg style="left:779.8px;top:130.5px" width="9" height="9" viewBox="0 0 9 9"><rect x="0.5" y="1" width="6.5" height="7.5" fill="#d8d8d8"/><rect x="2" y="0.5" width="1" height="8" fill="#666"/><path d="M4.5 5 L8.5 5 L8.5 8.8 L4.5 8.8Z" fill="#2ab3b0"/></svg>
<span style="left:789.08px;top:132.00px;font-size:8.150px;line-height:8.150px;color:#c4c4c4;transform:scaleX(0.9821);">InputSystem_Actions</span>
<svg style="left:763px;top:142.5px" width="4" height="5" viewBox="0 0 4 5"><path d="M0.3 0.2 V4.8 L3.6 2.5Z" fill="#808080"/></svg>
<svg style="left:771px;top:141.5px" width="9" height="7" viewBox="0 0 9 7"><path d="M0.3 0.3 H3.3 L4.2 1.3 H8.5 V6.7 H0.3Z" fill="#c8c8c8"/></svg>
<span style="left:781.50px;top:141.00px;font-size:8.450px;line-height:8.450px;color:#d2d2d2;font-weight:bold;transform:scaleX(0.9158);">Packages</span>
<svg style="left:938.5px;top:54.5px" width="7" height="7" viewBox="0 0 7 7"><circle cx="3.5" cy="3.5" r="3.2" fill="#c8c8c8"/><rect x="3" y="3" width="1.1" height="2.6" fill="#3c3c3c"/><rect x="3" y="1.4" width="1.1" height="1" fill="#3c3c3c"/></svg>
<span style="left:948.02px;top:54.00px;font-size:8.150px;line-height:8.150px;color:#c8c8c8;transform:scaleX(0.9944);">Inspector</span>
<svg style="left:1177.2px;top:54.3px" width="6" height="5.5" viewBox="0 0 6 5.5"><path d="M1.2 2.6 V1.8 Q1.2 0.4 2.8 0.4 Q4.4 0.4 4.4 1.8" fill="none" stroke="#c4c4c4" stroke-width="0.9"/><rect x="0.4" y="2.6" width="5.2" height="2.6" fill="none" stroke="#c4c4c4" stroke-width="0.9"/></svg>
<div style="left:1190.3px;top:54.0px;width:1.4px;height:1.4px;background:#c4c4c4;border-radius:50%"></div>
<div style="left:1190.3px;top:56.3px;width:1.4px;height:1.4px;background:#c4c4c4;border-radius:50%"></div>
<div style="left:1190.3px;top:58.6px;width:1.4px;height:1.4px;background:#c4c4c4;border-radius:50%"></div>
<svg style="left:935.5px;top:70.5px" width="14" height="14" viewBox="0 0 14 14"><g transform="scale(1.5555555555555556)"><path d="M4.5 0.6 L8.3 2.5 V6.6 L4.5 8.5 L0.7 6.6 V2.5Z M0.7 2.5 L4.5 4.4 L8.3 2.5 M4.5 4.4 V8.5" fill="none" stroke="#d0d0d0" stroke-width="0.62" stroke-linejoin="round"/></g></svg>
<svg style="left:950.5px;top:84px" width="4" height="3" viewBox="0 0 4 3"><path d="M0 0 H3.6 L1.8 2.4Z" fill="#c8c8c8"/></svg>
<div style="left:960.3px;top:72px;width:8.2px;height:8.3px;background:#2a2a2a;border-radius:1px"></div>
<svg style="left:961.5px;top:73.5px" width="6" height="5" viewBox="0 0 6 5"><path d="M0.5 2.5 L2.3 4.2 L5.5 0.8" fill="none" stroke="#d8d8d8" stroke-width="1"/></svg>
<div style="left:972px;top:71.2px;width:177.6px;height:9.9px;background:#2a2a2a;border-radius:2px"></div>
<span style="left:974.29px;top:72.00px;font-size:8.450px;line-height:8.450px;color:#d2d2d2;transform:scaleX(0.9608);">GameObject</span>
<div style="left:1151.6px;top:71.8px;width:8.7px;height:8.7px;background:#2a2a2a;border-radius:1px"></div>
<span style="left:1162.63px;top:72.00px;font-size:8.450px;line-height:8.450px;color:#bdbdbd;transform:scaleX(0.9740);">Static</span>
<svg style="left:1191.5px;top:75.2px" width="4" height="2.5" viewBox="0 0 4 2.5"><path d="M0 0 H4 L2.0 2.5Z" fill="#c4c4c4"/></svg>
<span style="left:956.63px;top:87.00px;font-size:8.450px;line-height:8.450px;color:#a8a8a8;transform:scaleX(0.9978);">Tag</span>
<div style="left:972.7px;top:86px;width:99.3px;height:8.7px;background:#474747;border-radius:2px"></div>
<span style="left:974.08px;top:87.00px;font-size:8.450px;line-height:8.450px;color:#d2d2d2;transform:scaleX(0.9777);">Untagged</span>
<svg style="left:1065.5px;top:89.3px" width="4" height="2.5" viewBox="0 0 4 2.5"><path d="M0 0 H4 L2.0 2.5Z" fill="#c4c4c4"/></svg>
<span style="left:1080.76px;top:87.00px;font-size:8.450px;line-height:8.450px;color:#a8a8a8;transform:scaleX(0.9477);">Layer</span>
<div style="left:1103.7px;top:86px;width:93.0px;height:8.7px;background:#474747;border-radius:2px"></div>
<span style="left:1104.53px;top:87.00px;font-size:8.450px;line-height:8.450px;color:#d2d2d2;transform:scaleX(0.9913);">Default</span>
<svg style="left:1189px;top:89.3px" width="4" height="2.5" viewBox="0 0 4 2.5"><path d="M0 0 H4 L2.0 2.5Z" fill="#c4c4c4"/></svg>
<div style="left:932px;top:100.5px;width:268px;height:1.0px;background:#2a2a2a;"></div>
<div style="left:932px;top:101.5px;width:268px;height:12.5px;background:#3e3e3e;"></div>
<svg style="left:937.3px;top:106px" width="5" height="4" viewBox="0 0 5 4"><path d="M0.2 0.3 H4.8 L2.5 3.6Z" fill="#808080"/></svg>
<svg style="left:945.5px;top:104px" width="9.5" height="9" viewBox="0 0 9.5 9"><path d="M4.7 4.8 V0.5" stroke="#c8d048" stroke-width="1.2"/><path d="M4.7 4.8 L0.6 7.4" stroke="#5ab8e0" stroke-width="1.2"/><path d="M4.7 4.8 L8.8 7.4" stroke="#d86060" stroke-width="1.2"/></svg>
<span style="left:969.62px;top:104.00px;font-size:8.450px;line-height:8.450px;color:#d8d8d8;font-weight:bold;transform:scaleX(0.9011);">Transform</span>
<svg style="left:1163.3px;top:104.5px" width="7.5" height="7.5" viewBox="0 0 7.5 7.5"><circle cx="3.75" cy="3.75" r="3.5" fill="#d0d0d0"/><path d="M2.4 2.9 Q2.5 1.6 3.8 1.6 Q5.1 1.7 5.1 2.8 Q5.1 3.6 3.9 4.2 V4.9" fill="none" stroke="#3e3e3e" stroke-width="0.9"/><rect x="3.4" y="5.5" width="0.9" height="0.9" fill="#3e3e3e"/></svg>
<svg style="left:1175px;top:104.5px" width="8" height="8" viewBox="0 0 8 8"><path d="M0.3 2.2 H7.7 M0.3 5.8 H7.7" stroke="#d0d0d0" stroke-width="0.9"/><rect x="4.2" y="0.8" width="1.5" height="2.8" fill="#d0d0d0"/><rect x="1.8" y="4.4" width="1.5" height="2.8" fill="#d0d0d0"/></svg>
<div style="left:1191.1px;top:104.5px;width:1.4px;height:1.4px;background:#c4c4c4;border-radius:50%"></div>
<div style="left:1191.1px;top:106.8px;width:1.4px;height:1.4px;background:#c4c4c4;border-radius:50%"></div>
<div style="left:1191.1px;top:109.1px;width:1.4px;height:1.4px;background:#c4c4c4;border-radius:50%"></div>
<div style="left:932px;top:114px;width:268px;height:44.5px;background:#383838;"></div>
<span style="left:942.93px;top:120.00px;font-size:8.450px;line-height:8.450px;color:#c4c4c4;transform:scaleX(0.9911);">Position</span>
<div style="left:1050.3px;top:117.8px;width:39.7px;height:10.6px;background:#2a2a2a;border-radius:2px"></div>
<span style="left:1051.96px;top:119.00px;font-size:8.450px;line-height:8.450px;color:#d2d2d2;transform:scaleX(1.0000);">0</span>
<div style="left:1103.2px;top:117.8px;width:40.8px;height:10.6px;background:#2a2a2a;border-radius:2px"></div>
<span style="left:1104.86px;top:119.00px;font-size:8.450px;line-height:8.450px;color:#d2d2d2;transform:scaleX(1.0000);">0</span>
<div style="left:1156.3px;top:117.8px;width:40.4px;height:10.6px;background:#2a2a2a;border-radius:2px"></div>
<span style="left:1157.96px;top:119.00px;font-size:8.450px;line-height:8.450px;color:#d2d2d2;transform:scaleX(1.0000);">0</span>
<span style="left:1041.42px;top:119.00px;font-size:8.450px;line-height:8.450px;color:#c4c4c4;transform:scaleX(0.8589);">X</span>
<span style="left:1095.06px;top:119.00px;font-size:8.450px;line-height:8.450px;color:#c4c4c4;transform:scaleX(0.8521);">Y</span>
<span style="left:1148.35px;top:119.00px;font-size:8.450px;line-height:8.450px;color:#c4c4c4;transform:scaleX(0.9683);">Z</span>
<span style="left:942.94px;top:132.00px;font-size:8.450px;line-height:8.450px;color:#c4c4c4;transform:scaleX(0.9837);">Rotation</span>
<div style="left:1050.3px;top:130.4px;width:39.7px;height:10.6px;background:#2a2a2a;border-radius:2px"></div>
<span style="left:1051.96px;top:132.00px;font-size:8.450px;line-height:8.450px;color:#d2d2d2;transform:scaleX(1.0000);">0</span>
<div style="left:1103.2px;top:130.4px;width:40.8px;height:10.6px;background:#2a2a2a;border-radius:2px"></div>
<span style="left:1104.86px;top:132.00px;font-size:8.450px;line-height:8.450px;color:#d2d2d2;transform:scaleX(1.0000);">0</span>
<div style="left:1156.3px;top:130.4px;width:40.4px;height:10.6px;background:#2a2a2a;border-radius:2px"></div>
<span style="left:1157.96px;top:132.00px;font-size:8.450px;line-height:8.450px;color:#d2d2d2;transform:scaleX(1.0000);">0</span>
<span style="left:1041.42px;top:132.00px;font-size:8.450px;line-height:8.450px;color:#c4c4c4;transform:scaleX(0.8589);">X</span>
<span style="left:1095.06px;top:132.00px;font-size:8.450px;line-height:8.450px;color:#c4c4c4;transform:scaleX(0.8521);">Y</span>
<span style="left:1148.35px;top:132.00px;font-size:8.450px;line-height:8.450px;color:#c4c4c4;transform:scaleX(0.9683);">Z</span>
<span style="left:943.24px;top:144.00px;font-size:8.450px;line-height:8.450px;color:#c4c4c4;transform:scaleX(0.9409);">Scale</span>
<div style="left:1050.3px;top:143px;width:39.7px;height:10.6px;background:#2a2a2a;border-radius:2px"></div>
<span style="left:1051.67px;top:144.00px;font-size:8.450px;line-height:8.450px;color:#d2d2d2;transform:scaleX(1.0000);">1</span>
<div style="left:1103.2px;top:143px;width:40.8px;height:10.6px;background:#2a2a2a;border-radius:2px"></div>
<span style="left:1104.57px;top:144.00px;font-size:8.450px;line-height:8.450px;color:#d2d2d2;transform:scaleX(1.0000);">1</span>
<div style="left:1156.3px;top:143px;width:40.4px;height:10.6px;background:#2a2a2a;border-radius:2px"></div>
<span style="left:1157.67px;top:144.00px;font-size:8.450px;line-height:8.450px;color:#d2d2d2;transform:scaleX(1.0000);">1</span>
<span style="left:1041.42px;top:144.00px;font-size:8.450px;line-height:8.450px;color:#c4c4c4;transform:scaleX(0.8589);">X</span>
<span style="left:1095.06px;top:144.00px;font-size:8.450px;line-height:8.450px;color:#c4c4c4;transform:scaleX(0.8521);">Y</span>
<span style="left:1148.35px;top:144.00px;font-size:8.450px;line-height:8.450px;color:#c4c4c4;transform:scaleX(0.9683);">Z</span>
<svg style="left:1026.8px;top:145.2px" width="9" height="6.5" viewBox="0 0 9 6.5"><path d="M3 1 H1.8 Q0.5 1 0.5 3.25 Q0.5 5.5 1.8 5.5 H3 M6 1 H7.2 Q8.5 1 8.5 3.25 Q8.5 5.5 7.2 5.5 H6 M1.5 0.3 L7.5 6.2" fill="none" stroke="#c4c4c4" stroke-width="0.9"/></svg>
<div style="left:932px;top:158.5px;width:268px;height:1.0px;background:#2a2a2a;"></div>
<div style="left:932px;top:159.5px;width:268px;height:13.5px;background:#3e3e3e;"></div>
<svg style="left:937.3px;top:164.3px" width="5" height="4" viewBox="0 0 5 4"><path d="M0.2 0.3 H4.8 L2.5 3.6Z" fill="#808080"/></svg>
<svg style="left:945.4px;top:162.3px" width="8.5" height="9" viewBox="0 0 8.5 9"><path d="M0.5 0.5 H6 L8 2.5 V8.5 H0.5Z" fill="#e4e4e4"/><path d="M2.5 6.5 Q4 3 6 3.2" stroke="#2aa06a" stroke-width="1.4" fill="none"/></svg>
<div style="left:957.8px;top:162.5px;width:6.9px;height:7.3px;background:#2a2a2a;border-radius:1px"></div>
<svg style="left:958.5px;top:163.5px" width="6" height="5" viewBox="0 0 6 5"><path d="M0.5 2.5 L2.3 4.2 L5.5 0.8" fill="none" stroke="#d8d8d8" stroke-width="1"/></svg>
<span style="left:969.39px;top:163.00px;font-size:8.450px;line-height:8.450px;color:#d8d8d8;font-weight:bold;transform:scaleX(0.9110);">Game Manager (Script)</span>
<svg style="left:1163.3px;top:163px" width="7.5" height="7.5" viewBox="0 0 7.5 7.5"><circle cx="3.75" cy="3.75" r="3.5" fill="#d0d0d0"/><path d="M2.4 2.9 Q2.5 1.6 3.8 1.6 Q5.1 1.7 5.1 2.8 Q5.1 3.6 3.9 4.2 V4.9" fill="none" stroke="#3e3e3e" stroke-width="0.9"/><rect x="3.4" y="5.5" width="0.9" height="0.9" fill="#3e3e3e"/></svg>
<svg style="left:1175px;top:163px" width="8" height="8" viewBox="0 0 8 8"><path d="M0.3 2.2 H7.7 M0.3 5.8 H7.7" stroke="#d0d0d0" stroke-width="0.9"/><rect x="4.2" y="0.8" width="1.5" height="2.8" fill="#d0d0d0"/><rect x="1.8" y="4.4" width="1.5" height="2.8" fill="#d0d0d0"/></svg>
<div style="left:1191.1px;top:163.0px;width:1.4px;height:1.4px;background:#c4c4c4;border-radius:50%"></div>
<div style="left:1191.1px;top:165.3px;width:1.4px;height:1.4px;background:#c4c4c4;border-radius:50%"></div>
<div style="left:1191.1px;top:167.6px;width:1.4px;height:1.4px;background:#c4c4c4;border-radius:50%"></div>
<span style="left:943.23px;top:177.00px;font-size:8.450px;line-height:8.450px;color:#7e7e7e;transform:scaleX(0.9732);">Script</span>
<div style="left:1042.9px;top:175.8px;width:154.1px;height:10.6px;background:#303030;border-radius:2px"></div>
<svg style="left:1044px;top:177.5px" width="5.5" height="7" viewBox="0 0 5.5 7"><path d="M0.3 0.3 H4 L5.2 1.5 V6.7 H0.3Z" fill="#8a8a8a"/><path d="M1.3 2.5 H4 M1.3 4 H4 M1.3 5.4 H4" stroke="#303030" stroke-width="0.6"/></svg>
<span style="left:1051.21px;top:177.00px;font-size:8.450px;line-height:8.450px;color:#7e7e7e;transform:scaleX(0.9120);">GameManager</span>
<svg style="left:1187.5px;top:177.2px" width="8" height="8" viewBox="0 0 8 8"><circle cx="4" cy="4" r="3.3" fill="none" stroke="#9a9a9a" stroke-width="0.9"/><circle cx="4" cy="4" r="0.9" fill="#9a9a9a"/></svg>
<div style="left:932px;top:190.8px;width:268px;height:1.0px;background:#2a2a2a;"></div>
<div style="left:995px;top:196.8px;width:142.7px;height:13.9px;background:#555555;border-radius:3px;box-shadow:0 1px 0 #242424"></div>
<span style="left:1037.20px;top:200.00px;font-size:8.450px;line-height:8.450px;color:#e0e0e0;transform:scaleX(0.9474);">Add Component</span>
<svg style="left:1.9px;top:633.6px" width="8.5" height="8.8" viewBox="0 0 8.5 8.8"><circle cx="4.1" cy="4" r="3.9" fill="#e8e8e8"/><path d="M5.3 6.5 L7.8 8.6 L3.5 7.5Z" fill="#e8e8e8"/><rect x="3.5" y="1.8" width="1.2" height="3.3" fill="#333"/><rect x="3.5" y="5.7" width="1.2" height="1.1" fill="#333"/></svg>
<span style="left:12.05px;top:634.00px;font-size:8.450px;line-height:8.450px;color:#c8c8c8;transform:scaleX(0.9584);">Hello World!</span>
<div style="left:1150.5px;top:632px;width:0.8px;height:13px;background:#2a2a2a;"></div>
<div style="left:1166.8px;top:632px;width:0.8px;height:13px;background:#2a2a2a;"></div>
<div style="left:1183px;top:632px;width:0.8px;height:13px;background:#2a2a2a;"></div>
<svg style="left:1154.4px;top:634.3px" width="9" height="8.5" viewBox="0 0 9 8.5"><path d="M1.5 0.5 L8 8 M2 2 Q4.5 0 7 2.5 L7.5 6 Q6 8.5 3 8 L1 5Z" fill="#d0d0d0" stroke="#d0d0d0" stroke-width="0.7"/><path d="M0.8 0.5 L8.5 8.2" stroke="#191919" stroke-width="0.8"/></svg>
<svg style="left:1170.6px;top:634.5px" width="9" height="8.5" viewBox="0 0 9 8.5"><ellipse cx="4.5" cy="2" rx="4" ry="1.7" fill="#d8d8d8"/><path d="M0.5 3.5 Q4.5 5.6 8.5 3.5 V5.3 Q4.5 7.4 0.5 5.3Z" fill="#d8d8d8"/><path d="M0.5 6.3 Q4.5 8.4 8.5 6.3 V7 Q4.5 9 0.5 7Z" fill="#d8d8d8"/></svg>
<svg style="left:1186.9px;top:634px" width="9" height="9" viewBox="0 0 9 9"><circle cx="4.5" cy="4.5" r="4" fill="none" stroke="#c4c4c4" stroke-width="0.9"/><path d="M2.6 4.6 L4 5.9 L6.4 3.2" fill="none" stroke="#c4c4c4" stroke-width="0.9"/></svg>
</body></html>
